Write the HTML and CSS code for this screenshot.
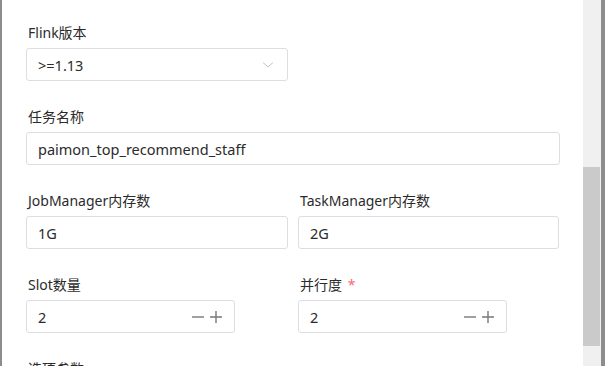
FILE: index.html
```html
<!DOCTYPE html>
<html lang="zh-CN">

<head>
    <meta charset="UTF-8">
    <meta name="viewport" content="width=device-width, initial-scale=1.0">
    <link rel="stylesheet" href="styles.css">
</head>

<body>
    <div class="frame">
        <div class="panel">
            <form class="job-form">
                <div class="field half">
                    <label>Flink版本</label>
                    <div class="control select">
                        <span>&gt;=1.13</span>
                        <svg class="chevron" width="12" height="8" viewBox="0 0 12 8"><path d="M1 1.5 L6 6 L11 1.5" fill="none" stroke="#c4c4c4" stroke-width="1"/></svg>
                    </div>
                </div>

                <div class="field full">
                    <label>任务名称</label>
                    <div class="control">paimon_top_recommend_staff</div>
                </div>

                <div class="row">
                    <div class="field">
                        <label>JobManager内存数</label>
                        <div class="control">1G</div>
                    </div>
                    <div class="field">
                        <label>TaskManager内存数</label>
                        <div class="control">2G</div>
                    </div>
                </div>

                <div class="row">
                    <div class="field">
                        <label>Slot数量</label>
                        <div class="control number">
                            <span>2</span>
                            <span class="steps">
                                <svg width="12" height="12" viewBox="0 0 12 12"><path d="M0 6 H12" stroke="#777" stroke-width="1.4"/></svg>
                                <svg width="12" height="12" viewBox="0 0 12 12"><path d="M0 6 H12 M6 0 V12" stroke="#777" stroke-width="1.4"/></svg>
                            </span>
                        </div>
                    </div>
                    <div class="field">
                        <label>并行度 <em class="req">*</em></label>
                        <div class="control number">
                            <span>2</span>
                            <span class="steps">
                                <svg width="12" height="12" viewBox="0 0 12 12"><path d="M0 6 H12" stroke="#777" stroke-width="1.4"/></svg>
                                <svg width="12" height="12" viewBox="0 0 12 12"><path d="M0 6 H12 M6 0 V12" stroke="#777" stroke-width="1.4"/></svg>
                            </span>
                        </div>
                    </div>
                </div>

                <div class="field">
                    <label>选项参数</label>
                </div>
            </form>
        </div>

        <div class="scrollbar">
            <div class="thumb"></div>
        </div>
        <div class="edge"></div>
    </div>
</body>
</html>
```

FILE: styles.css
```css
html, body {
    margin: 0;
    height: 100%;
    overflow: hidden;
    background: #fff;
}
.frame {
    display: flex;
    height: 366px;
    font-family: "Noto Sans", "Noto Sans CJK SC", sans-serif;
    font-size: 14px;
    color: #333;
}
.panel {
    flex: 1;
    border-left: 2px solid #8d8d8d;
    padding: 22px 0 0 24px;
    overflow: hidden;
}
.job-form {
    width: 534px;
}
.field {
    display: flex;
    flex-direction: column;
    margin-bottom: 25px;
}
.field.half {
    width: 262px;
}
label {
    display: block;
    line-height: 22px;
    margin: 0 0 4px 2px;
    color: #2b2b2b;
}
.req {
    font-style: normal;
    color: #f56c6c;
    margin-left: 2px;
}
.control {
    display: flex;
    align-items: center;
    justify-content: space-between;
    box-sizing: border-box;
    height: 33px;
    padding: 0 11px;
    border: 1px solid #dedee2;
    border-radius: 3px;
    background: #fff;
    color: #2b2b2b;
    font-size: 14.5px;
}
.row {
    display: grid;
    grid-template-columns: 262px 261px;
    column-gap: 10px;
}
.control.number {
    width: 209px;
}
.steps {
    display: flex;
    gap: 6px;
    margin-right: 1px;
}
.chevron {
    margin-right: 2px;
}
.scrollbar {
    width: 18px;
    background: #f0f0f0;
}
.thumb {
    margin-top: 167px;
    height: 179px;
    width: 17px;
    background: #cacaca;
}
.edge {
    width: 4px;
    background: #8d8d8d;
}
```
